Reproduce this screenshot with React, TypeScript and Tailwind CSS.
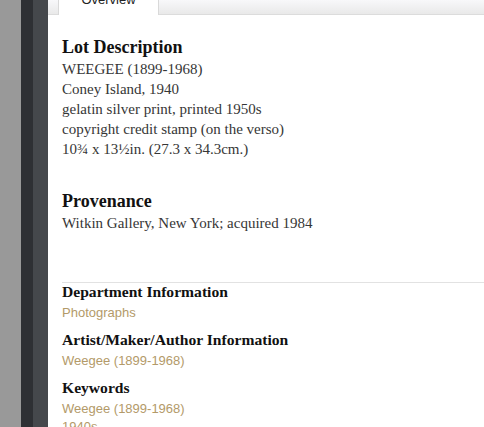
export default function App() {
  const serif = { fontFamily: '"Liberation Serif", "DejaVu Serif", serif' };
  const sans = { fontFamily: '"Liberation Sans", Arial, sans-serif' };
  return (
    <div className="flex h-[427px] w-full overflow-hidden bg-white">
      <div className="w-[21px] shrink-0 bg-[#999999]" />
      <div className="w-[12px] shrink-0 bg-[#2e3034]" />
      <div className="w-[15px] shrink-0 bg-[#45484c]" />
      <div className="flex min-w-0 flex-1 flex-col">
        <div className="flex h-[15px] shrink-0 bg-gradient-to-b from-[#f8f8fa] to-[#e8e8e8] shadow-[inset_0_-1px_0_#dcdcdc]">
          <div className="ml-[10px] flex h-full w-[101px] justify-center overflow-hidden border-x border-[#d9d9d9] bg-white">
            <span className="-mt-[7px] block text-[13px] leading-[13px] text-[#222]" style={sans}>
              Overview
            </span>
          </div>
        </div>
        <div className="pl-[14px]" style={serif}>
          <h2 className="mt-[22px] text-[18px] font-bold leading-[20px] text-[#111]">Lot Description</h2>
          <div className="mt-[2px] text-[15px] leading-[20px] text-[#363636]">
            <div>WEEGEE (1899-1968)</div>
            <div>Coney Island, 1940</div>
            <div>gelatin silver print, printed 1950s</div>
            <div>copyright credit stamp (on the verso)</div>
            <div>10¾ x 13½in. (27.3 x 34.3cm.)</div>
          </div>
          <h2 className="mt-[32px] text-[18px] font-bold leading-[20px] text-[#111]">Provenance</h2>
          <div className="mt-[2px] text-[15px] leading-[20px] text-[#363636]">
            Witkin Gallery, New York; acquired 1984
          </div>
          <div className="mt-[49px] border-t border-[#e2e2e2]">
            <h3 className="text-[15.6px] font-bold leading-[18px] text-[#111]">Department Information</h3>
            <div className="mt-[3px] text-[13px] leading-[18px] text-[#b39a69]" style={sans}>
              Photographs
            </div>
            <h3 className="mt-[9px] text-[15.6px] font-bold leading-[18px] text-[#111]">
              Artist/Maker/Author Information
            </h3>
            <div className="mt-[3px] text-[13px] leading-[18px] text-[#b39a69]" style={sans}>
              Weegee (1899-1968)
            </div>
            <h3 className="mt-[9px] text-[15.6px] font-bold leading-[18px] text-[#111]">Keywords</h3>
            <div className="mt-[3px] text-[13px] leading-[18px] text-[#b39a69]" style={sans}>
              <div>Weegee (1899-1968)</div>
              <div>1940s</div>
            </div>
          </div>
        </div>
      </div>
    </div>
  );
}
